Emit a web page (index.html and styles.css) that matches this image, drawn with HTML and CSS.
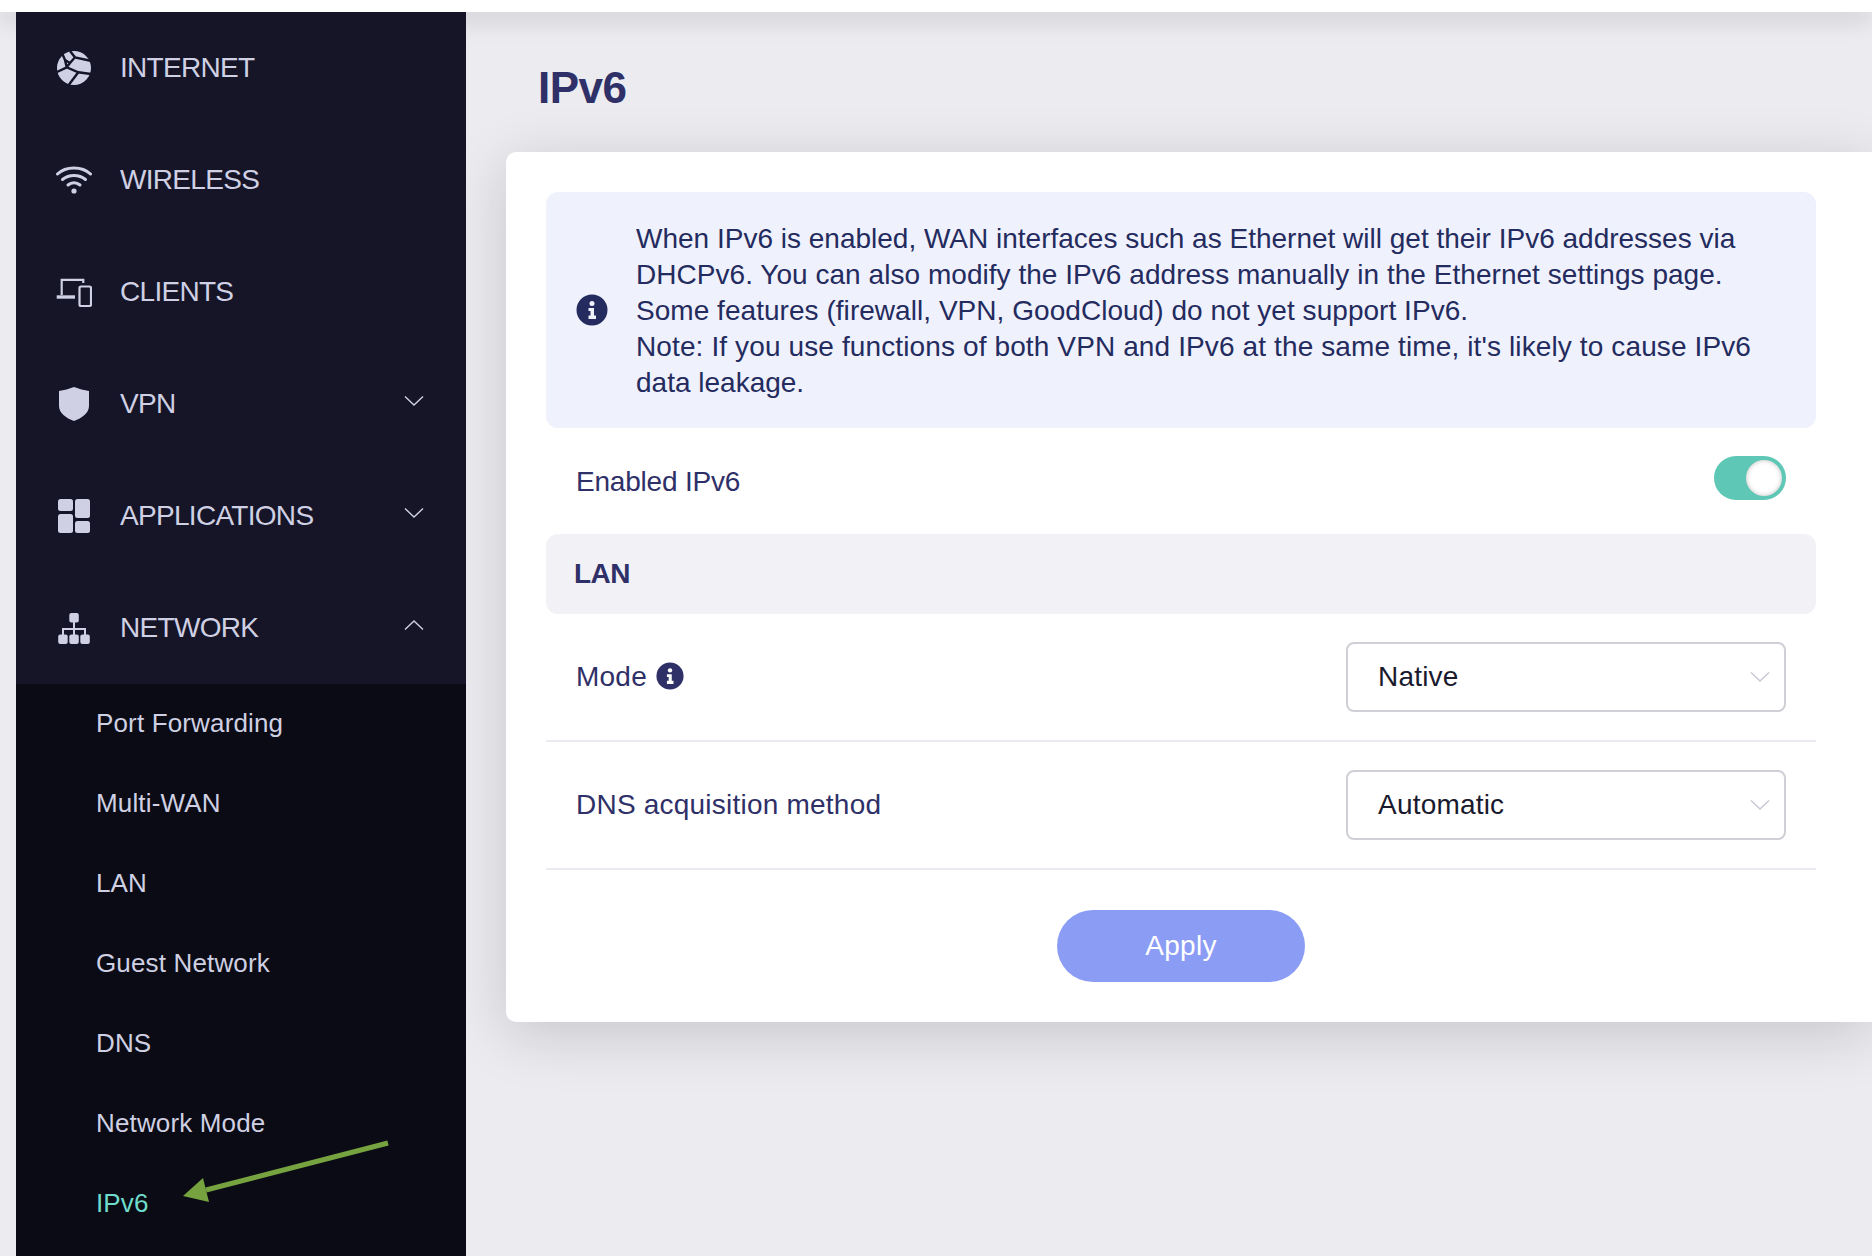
FILE: index.html
```html
<!DOCTYPE html>
<html lang="en">
<head>
  <meta charset="UTF-8" />
  <meta name="viewport" content="width=device-width, initial-scale=1.0"/>
  <title>IPv6</title>
  <link rel="stylesheet" href="styles.css">
</head>
<body>
  <div class="topbar"></div>
  <div class="layout">
    <div class="edge"></div>
    <nav class="sidebar">
      <div class="nav-item">
        <svg class="nav-icon" viewBox="0 0 36 36">
          <circle cx="18" cy="18" r="17" fill="#cfd0e3"/>
          <path d="M14 1 L19 7.300 L35.600 11 M19 7.300 L14 13 L9 10 L6 3 M14 13 L10.700 17.300 L22.300 22.300 L35 24 M22.300 22.300 L12 36 M10.700 17.300 L1 22 M9 10 L10.700 17.300" fill="none" stroke="#151527" stroke-width="2.400"/>
        </svg>
        <span>INTERNET</span>
      </div>
      <div class="nav-item">
        <svg class="nav-icon" viewBox="0 0 36 36" fill="none" stroke="#cfd0e3" stroke-width="3" stroke-linecap="round">
          <path d="M1.500 12 C10 4 26 4 34.500 12"/>
          <path d="M6.500 17.500 C13 12 23 12 29.500 17.500"/>
          <path d="M12 23 C15.500 20 20.500 20 24 23"/>
          <circle cx="18" cy="29" r="2.600" fill="#cfd0e3" stroke="none"/>
        </svg>
        <span>WIRELESS</span>
      </div>
      <div class="nav-item">
        <svg class="nav-icon" viewBox="0 0 36 36" fill="none" stroke="#cfd0e3" stroke-width="2.200">
          <path d="M5.700 21 V5.800 H27.300 V9"/>
          <path d="M0.700 23 H19" stroke-width="3.400"/>
          <rect x="23.500" y="12.500" width="11.500" height="19.500" rx="1.500"/>
        </svg>
        <span>CLIENTS</span>
      </div>
      <div class="nav-item">
        <svg class="nav-icon" viewBox="0 0 36 36">
          <path d="M18 1 C23 3 28 4 33 5 V20 C33 27 26 32 18 35 C10 32 3 27 3 20 V5 C8 4 13 3 18 1 Z" fill="#cfd0e3"/>
        </svg>
        <span>VPN</span>
        <svg class="chevron" viewBox="0 0 20 12"><path d="M1 1.500 L10 10 L19 1.500"/></svg>
      </div>
      <div class="nav-item">
        <svg class="nav-icon" viewBox="0 0 36 36" fill="#cfd0e3">
          <rect x="2" y="1" width="15" height="12" rx="2.500"/>
          <rect x="19" y="1" width="15" height="19" rx="2.500"/>
          <rect x="2" y="16" width="15" height="19" rx="2.500"/>
          <rect x="19" y="23" width="15" height="12" rx="2.500"/>
        </svg>
        <span>APPLICATIONS</span>
        <svg class="chevron" viewBox="0 0 20 12"><path d="M1 1.500 L10 10 L19 1.500"/></svg>
      </div>
      <div class="nav-item">
        <svg class="nav-icon" viewBox="0 0 36 36">
          <path d="M18 12 V27 M7 27 V19 H29 V27" fill="none" stroke="#cfd0e3" stroke-width="2"/>
          <g fill="#cfd0e3">
            <rect x="13.300" y="3" width="9.500" height="9.500" rx="2"/>
            <rect x="2.200" y="24.500" width="9.500" height="9.500" rx="2"/>
            <rect x="13.300" y="24.500" width="9.500" height="9.500" rx="2"/>
            <rect x="24.300" y="24.500" width="9.500" height="9.500" rx="2"/>
          </g>
        </svg>
        <span>NETWORK</span>
        <svg class="chevron" viewBox="0 0 20 12"><path d="M1 10.500 L10 2 L19 10.500"/></svg>
      </div>
      <div class="submenu">
        <a>Port Forwarding</a>
        <a>Multi-WAN</a>
        <a>LAN</a>
        <a>Guest Network</a>
        <a>DNS</a>
        <a>Network Mode</a>
        <a class="active">IPv6</a>
        <svg class="arrow" viewBox="0 0 210 75">
          <path d="M206 13 L24 60" stroke="#76a33f" stroke-width="5" fill="none"/>
          <path d="M1 66 L21 48 L27 72 Z" fill="#76a33f"/>
        </svg>
      </div>
    </nav>

    <main class="content">
      <h1>IPv6</h1>
      <section class="card">
        <div class="alert">
          <svg class="info info-lg" viewBox="0 0 32 32">
            <circle cx="16" cy="16" r="15.500"/>
            <circle cx="16" cy="9.500" r="2.500" fill="#eff1fc"/>
            <path d="M12.500 14 H18 V21.500 H20 V25 H12.500 V21.500 H14.500 V17 H12.500 Z" fill="#eff1fc"/>
          </svg>
          <p>When IPv6 is enabled, WAN interfaces such as Ethernet will get their IPv6 addresses via<br>
          <span class="line-mid">DHCPv6. You can also modify the IPv6 address manually in the Ethernet settings page.</span><br>
          <span class="line-mid">Some features (firewall, VPN, GoodCloud) do not yet support IPv6.</span><br>
          <span class="line-note">Note: If you use functions of both VPN and IPv6 at the same time, it's likely to cause IPv6</span><br>
          data leakage.</p>
        </div>

        <div class="row-enable">
          <span>Enabled IPv6</span>
          <div class="toggle"><div class="knob"></div></div>
        </div>

        <div class="section-head">LAN</div>

        <div class="form-row">
          <label>Mode
            <svg class="info info-sm" viewBox="0 0 32 32">
              <circle cx="16" cy="16" r="15.500"/>
              <circle cx="16" cy="9.500" r="2.500" fill="#fff"/>
              <path d="M12.500 14 H18 V21.500 H20 V25 H12.500 V21.500 H14.500 V17 H12.500 Z" fill="#fff"/>
            </svg>
          </label>
          <div class="select">
            <span>Native</span>
            <svg class="select-arrow" viewBox="0 0 20 12"><path d="M1 1.500 L10 10 L19 1.500"/></svg>
          </div>
        </div>

        <div class="form-row">
          <label>DNS acquisition method</label>
          <div class="select">
            <span>Automatic</span>
            <svg class="select-arrow" viewBox="0 0 20 12"><path d="M1 1.500 L10 10 L19 1.500"/></svg>
          </div>
        </div>

        <div class="actions">
          <button>Apply</button>
        </div>
      </section>
    </main>
  </div>
</body>
</html>
```

FILE: styles.css
```css
* {
  box-sizing: border-box;
}

html,
body {
  margin: 0;
  height: 100%;
  overflow: hidden;
}

body {
  font-family: 'Liberation Sans', Arial, sans-serif;
  background-color: #ecebf0;
  color: #2f3068;
  display: flex;
  flex-direction: column;
}

.topbar {
  height: 12px;
  flex: none;
  background: #ffffff;
  position: relative;
  z-index: 2;
  box-shadow: 0 6px 24px rgba(0, 0, 0, 0.18);
}

.layout {
  flex: 1;
  display: flex;
  min-height: 0;
}

.edge {
  width: 16px;
  flex: none;
}

/* sidebar */
.sidebar {
  width: 450px;
  flex: none;
  background: #151527;
  color: #cfd0e3;
  position: relative;
  z-index: 3;
}

.nav-item {
  height: 112px;
  display: flex;
  align-items: center;
  padding: 0 42px 0 40px;
  font-size: 28px;
  letter-spacing: -0.7px;
}

.nav-icon {
  width: 36px;
  height: 36px;
  flex: none;
  margin-right: 28px;
}

.nav-item span {
  flex: 1;
}

.chevron {
  width: 20px;
  height: 12px;
  flex: none;
  margin-top: -6px;
  fill: none;
  stroke: #cfd0e3;
  stroke-width: 1.400;
}

.submenu {
  position: relative;
  background: #0a0b14;
  height: 572px;
}

.submenu a {
  display: flex;
  align-items: center;
  height: 80px;
  padding: 0 0 1px 80px;
  font-size: 26px;
  letter-spacing: 0.15px;
}

.submenu a.active {
  color: #6fdccb;
}

.arrow {
  position: absolute;
  left: 166px;
  top: 446px;
  width: 210px;
  height: 75px;
}

/* main */
.content {
  flex: 1;
  min-width: 0;
  padding-left: 40px;
}

h1 {
  margin: 0;
  height: 140px;
  padding: 52px 0 0 32px;
  font-size: 44px;
  line-height: 48px;
  font-weight: 700;
  letter-spacing: -0.5px;
  color: #2f3068;
}

.card {
  height: 870px;
  background: #ffffff;
  border-radius: 10px 0 0 10px;
  box-shadow: 0 12px 60px rgba(0, 0, 0, 0.16);
  padding: 40px 56px 40px 40px;
}

.alert {
  height: 236px;
  background: #eff1fc;
  border-radius: 12px;
  display: flex;
  align-items: center;
  padding-left: 30px;
  color: #242b5e;
}

.alert p {
  margin: 1px 0 0;
  font-size: 28px;
  line-height: 36px;
}

.line-mid {
  letter-spacing: 0.04px;
}

.line-note {
  letter-spacing: 0.12px;
}

.info {
  flex: none;
  fill: #242b5e;
}

.info-lg {
  width: 32px;
  height: 32px;
  margin-right: 28px;
}

.info-sm {
  width: 28px;
  height: 28px;
  margin: -2px 0 0 9px;
  fill: #2f3068;
}

.row-enable {
  height: 106px;
  display: flex;
  align-items: center;
  justify-content: space-between;
  padding: 0 30px;
  font-size: 28px;
  letter-spacing: -0.2px;
}

.row-enable span {
  margin-top: 2px;
}

.toggle {
  width: 72px;
  height: 44px;
  margin-top: -6px;
  border-radius: 22px;
  background: #5fc7b6;
  display: flex;
  align-items: center;
  justify-content: flex-end;
  padding-right: 4px;
}

.knob {
  width: 36px;
  height: 36px;
  border-radius: 50%;
  background: #ffffff;
  box-shadow: inset 0 0 5px rgba(0, 0, 0, 0.25);
}

.section-head {
  height: 80px;
  display: flex;
  align-items: center;
  padding-left: 28px;
  background: #f2f1f6;
  border-radius: 12px;
  font-size: 28px;
  font-weight: 700;
  letter-spacing: -0.5px;
}

.form-row {
  height: 128px;
  display: flex;
  align-items: center;
  justify-content: space-between;
  padding: 0 30px;
  border-bottom: 2px solid #ebeaf0;
  font-size: 28px;
}

.form-row label {
  display: flex;
  align-items: center;
  letter-spacing: 0.22px;
}

.select {
  width: 440px;
  height: 70px;
  border: 2px solid #cfcfd6;
  border-radius: 8px;
  display: flex;
  align-items: center;
  justify-content: space-between;
  padding: 0 14px 0 30px;
  color: #1a1a2e;
  letter-spacing: 0.2px;
}

.select-arrow {
  width: 20px;
  height: 12px;
  fill: none;
  stroke: #c8c9d6;
  stroke-width: 1.600;
}

.actions {
  display: flex;
  justify-content: center;
  padding-top: 40px;
}

button {
  width: 248px;
  height: 72px;
  border: none;
  border-radius: 36px;
  background: #8b9cf4;
  color: #ffffff;
  font-family: inherit;
  font-size: 28px;
  letter-spacing: 0.3px;
}
```
